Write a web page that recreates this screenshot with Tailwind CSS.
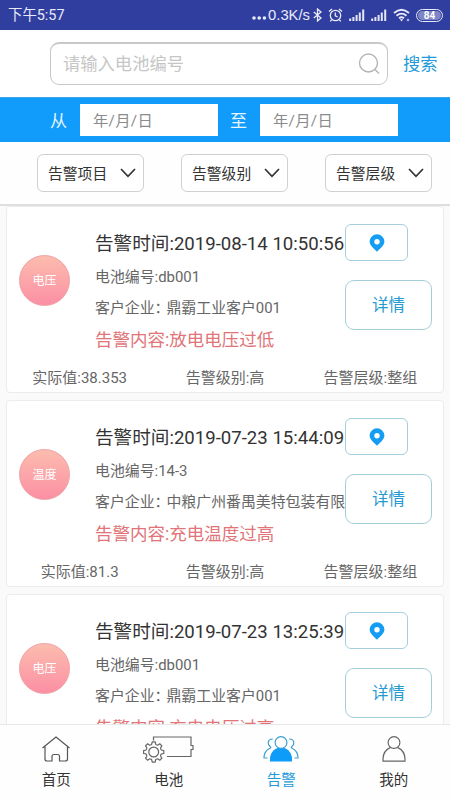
<!DOCTYPE html>
<html lang="zh-CN">
<head>
<meta charset="utf-8">
<title>告警</title>
<script src="https://cdn.jsdelivr.net/npm/@tailwindcss/browser@4"></script>
</head>
<body class="bg-white">
<svg class="hidden">
  <symbol id="chev" viewBox="0 0 16 10"><path d="M1 1l7 7.3L15 1" fill="none" stroke="#333" stroke-width="1.7"/></symbol>
  <symbol id="pin" viewBox="0 0 16 18"><path fill-rule="evenodd" fill="#149df2" d="M8 .3A7.4 7.4 0 0 0 .6 7.6C.6 11.300 4 14 8 17.700 12 14 15.400 11.300 15.400 7.600A7.400 7.400 0 0 0 8 .3zM8 5a2.700 2.700 0 1 1 0 5.400A2.700 2.700 0 0 1 8 5z"/></symbol>
  <symbol id="sig" viewBox="0 0 16 12"><path d="M1.200 12V9.500M4.400 12V8M7.600 12V6M10.800 12V3.500M14.200 12V.5" stroke="#e4e6f8" stroke-width="2" fill="none"/></symbol>
</svg>
<div class="w-[450px] h-[800px] overflow-hidden flex flex-col bg-[#fdfdfd] font-[Roboto,'Noto_Sans_CJK_SC',sans-serif] text-[#666]">
  <header class="h-[30px] shrink-0 bg-[#303f9f] flex items-center pl-2 pr-[7px] text-[#e8eafa]">
    <span class="text-[14.400px] leading-none grow pt-[2px]">下午5:57</span>
    <svg class="w-[15px] h-[4px] mt-[6px] mr-px" viewBox="0 0 15 4"><g fill="#e8eafa"><circle cx="2" cy="2" r="1.800"/><circle cx="7.200" cy="2" r="1.800"/><circle cx="12.400" cy="2" r="1.800"/></g></svg>
    <span class="text-[14.800px] leading-none font-['Liberation_Sans',sans-serif]">0.3K/s</span>
    <svg class="w-[9px] h-[14px] ml-[3px]" viewBox="0 0 9 14"><path d="M.8 4l7.200 6L4.500 13V1L8 4 .8 10" fill="none" stroke="#e8eafa" stroke-width="1.300"/></svg>
    <svg class="w-[15px] h-[14px] ml-[6px]" viewBox="0 0 15 14"><g fill="none" stroke="#e8eafa" stroke-width="1.300"><circle cx="7.500" cy="7.500" r="5.200"/><path d="M7.300 4.500v3.300l2.300 1M1 3.500L4 1M14 3.500L11 1M3.500 12L2.300 13.400M11.500 12l1.200 1.400"/></g></svg>
    <svg class="w-4 h-3 ml-[6px]"><use href="#sig"/></svg>
    <svg class="w-4 h-3 ml-[6px]"><use href="#sig"/></svg>
    <svg class="w-[17px] h-[14px] ml-[6px]" viewBox="0 0 17 14"><g fill="none" stroke="#e8eafa" stroke-width="1.800"><path d="M1 5Q8.500-1.500 16 5M3.500 7.800Q8.500 3.500 13.500 7.800M6 10.300Q8.500 8.300 11 10.300"/></g><path d="M6.800 11.200h3.400L8.500 13.500z" fill="#e8eafa"/><circle cx="15" cy="12" r="1.300" fill="#aab0e0"/></svg>
    <div class="w-[27px] h-[13px] ml-[6px] rounded-full border border-[#e8eafa] bg-[#7d86c6] bg-clip-content p-px text-[10px] font-bold leading-[9px] text-center text-white">84</div>
  </header>
  <div class="h-[67px] shrink-0 bg-white flex items-center pl-[50px]">
    <div class="w-[338px] h-[43px] border border-[#c8c8c8] border-t-2 rounded-[9px] flex items-center justify-between pl-3 pr-[7px]">
      <span class="text-[17.300px] leading-none pt-[2px] text-[#c6c6c6]">请输入电池编号</span>
      <svg class="w-[22px] h-[22px]" viewBox="0 0 22 22"><g fill="none" stroke="#b4b4b4" stroke-width="1.400"><circle cx="10.500" cy="10" r="9"/><path d="M17 16.500l4 4"/></g></svg>
    </div>
    <span class="ml-[15px] text-[17.300px] leading-none pt-[2px] text-[#259ad8]">搜索</span>
  </div>
  <div class="h-[45px] shrink-0 bg-[#119bfb] border-t border-[#3aa6e8] flex items-center pl-[50px] text-[17px] leading-none text-[#e6f5ff]">
    <span class="w-[30px] pt-[3px]">从</span>
    <div class="w-[138px] h-[32px] bg-white flex items-center pl-[13px] pt-[3px] text-[#8b8b8b] text-[15.300px] tracking-[.3px]">年/月/日</div>
    <span class="w-[30px] ml-[12px] pt-[3px]">至</span>
    <div class="w-[138px] h-[32px] bg-white flex items-center pl-[13px] pt-[3px] text-[#8b8b8b] text-[15.300px] tracking-[.3px]">年/月/日</div>
  </div>
  <div class="h-[64px] shrink-0 bg-[#fefefe] border-b-2 border-[#dedede] flex items-center gap-[37px] pl-[37px] text-[14.800px] leading-none text-[#333]">
    <div class="w-[107px] h-[38px] border border-[#d0d0d0] rounded-md bg-white flex items-center justify-between pl-[10px] pr-[7px]"><span class="pt-[2px]">告警项目</span><svg class="w-4 h-[10px]"><use href="#chev"/></svg></div>
    <div class="w-[107px] h-[38px] border border-[#d0d0d0] rounded-md bg-white flex items-center justify-between pl-[10px] pr-[7px]"><span class="pt-[2px]">告警级别</span><svg class="w-4 h-[10px]"><use href="#chev"/></svg></div>
    <div class="w-[107px] h-[38px] border border-[#d0d0d0] rounded-md bg-white flex items-center justify-between pl-[10px] pr-[7px]"><span class="pt-[2px]">告警层级</span><svg class="w-4 h-[10px]"><use href="#chev"/></svg></div>
  </div>
  <main class="h-[518px] shrink-0 overflow-hidden bg-[#fafafa] px-[6px] flex flex-col gap-[7px] whitespace-nowrap" id="list">
  </main>
  <nav class="h-[76px] shrink-0 bg-[#fefefe] border-t border-[#e8e8e8] grid grid-cols-4 text-[14.500px] leading-[18px] text-[#333] text-center">
    <div class="flex flex-col items-center pt-[10px] gap-[9px]">
      <svg class="w-[30px] h-[28px]" viewBox="0 0 30 28"><path d="M1.500 13L15 2l13.500 11M4 11.500V24Q4 26 6 26H11V21.500Q11 19.500 13 19.500H16.500Q18.500 19.500 18.500 21.500V26H24Q26.500 26 26.500 24V11.500" fill="none" stroke="#555" stroke-width="1.200"/></svg><span>首页</span></div>
    <div class="flex flex-col items-center pt-[10px] gap-[9px]">
      <svg class="w-[52px] h-[28px]" viewBox="0 0 52 28"><g fill="none" stroke="#666" stroke-width="1.200"><path d="M10.500 5.500V2H48v8.500h2v4H48v7H24"/><circle cx="10.700" cy="17" r="4.900"/>
        <g transform="translate(10.700 17)" stroke-linejoin="round"><path id="tooth" d="M-2.980-7.210Q-2.100-7.300-1.900-8L-1.500-10.100H1.500L1.900-8Q2.100-7.300 2.980-7.210"/><use href="#tooth" transform="rotate(45)"/><use href="#tooth" transform="rotate(90)"/><use href="#tooth" transform="rotate(135)"/><use href="#tooth" transform="rotate(180)"/><use href="#tooth" transform="rotate(225)"/><use href="#tooth" transform="rotate(270)"/><use href="#tooth" transform="rotate(315)"/></g></g></svg><span>电池</span></div>
    <div class="flex flex-col items-center pt-[10px] gap-[9px] text-[#259ad8]">
      <svg class="w-[36px] h-[28px]" viewBox="0 0 36 28"><path d="M7 26.500v-2.500C7 18 11 14 15 13h6C25 14 29 18 29 24v2.500z" fill="#0d9df8"/><g stroke="#3a9fd2" stroke-width="1.200"><circle cx="18" cy="7.500" r="5.900" fill="#fefefe"/><path fill="none" d="M9.800 4Q5.200 4 5.200 8Q5.200 10 7 11.500Q8.500 12.700 7 13.300Q1 16 1 23H4.500M26.200 4Q30.800 4 30.800 8Q30.800 10 29 11.500Q27.500 12.700 29 13.300Q35 16 35 23H31.500"/></g></svg><span>告警</span></div>
    <div class="flex flex-col items-center pt-[10px] gap-[9px]">
      <svg class="w-[26px] h-[28px]" viewBox="0 0 26 28"><g fill="none" stroke="#666" stroke-width="1.200"><circle cx="13" cy="7.500" r="5.900"/><path d="M9.500 12.400C5 14.500 2 18.500 2 24v2.200H24V24C24 18.500 21 14.500 16.500 12.400"/></g></svg><span>我的</span></div>
  </nav>
</div>
<template id="card">
  <article class="h-[187px] shrink-0 bg-white border border-[#ececec] rounded-[4px] flex flex-col">
    <div class="h-[155px] shrink-0 flex">
      <div class="w-[51px] h-[51px] ml-[12px] mt-[48px] shrink-0 rounded-full border border-[#f0a0a4] bg-linear-to-b from-[#fcbcae] to-[#fb8fa4] text-white text-[12px] flex items-center justify-center" data-f="type"></div>
      <div class="w-[250px] ml-[25px] pt-[23px] shrink-0 text-[14.900px]">
        <div class="text-[18.600px] leading-[28px] text-[#333]">告警时间:<span data-f="time"></span></div>
        <div class="mt-[9px] leading-[20px]">电池编号:<span data-f="no"></span></div>
        <div class="mt-[11px] leading-[20px]">客户企业：<span class="-ml-[3px]" data-f="org"></span></div>
        <div class="mt-[10px] text-[17.500px] leading-[24px] text-[#e07478]">告警内容:<span data-f="msg"></span></div>
      </div>
      <div class="pt-[17px] shrink-0">
        <div class="w-[63px] h-[37px] border border-[#a5cfde] rounded-md flex items-center justify-center"><svg class="w-4 h-[18px]"><use href="#pin"/></svg></div>
        <div class="w-[87px] h-[50px] mt-[19px] border border-[#a5cfd8] rounded-[9px] flex items-center justify-center text-[16.500px] text-[#259ad0]"><span class="pt-[3px]">详情</span></div>
      </div>
    </div>
    <div class="grid grid-cols-3 text-center text-[15px] leading-[32px]" data-stats><span>实际值:<span data-f="val"></span></span><span>告警级别:高</span><span>告警层级:整组</span></div>
  </article>
</template>
<script>
const rows = [
  {type:'电压', time:'2019-08-14 10:50:56', no:'db001', org:'鼎霸工业客户001', msg:'放电电压过低', val:'38.353'},
  {type:'温度', time:'2019-07-23 15:44:09', no:'14-3', org:'中粮广州番禺美特包装有限', msg:'充电温度过高', val:'81.3'},
  {type:'电压', time:'2019-07-23 13:25:39', no:'db001', org:'鼎霸工业客户001', msg:'充电电压过高'}
];
for (const r of rows) {
  const n = document.getElementById('card').content.cloneNode(true);
  if (!r.val) n.querySelector('[data-stats]').remove();
  n.querySelectorAll('[data-f]').forEach(e => e.textContent = r[e.dataset.f]);
  document.getElementById('list').append(n);
}
</script>
</body>
</html>
